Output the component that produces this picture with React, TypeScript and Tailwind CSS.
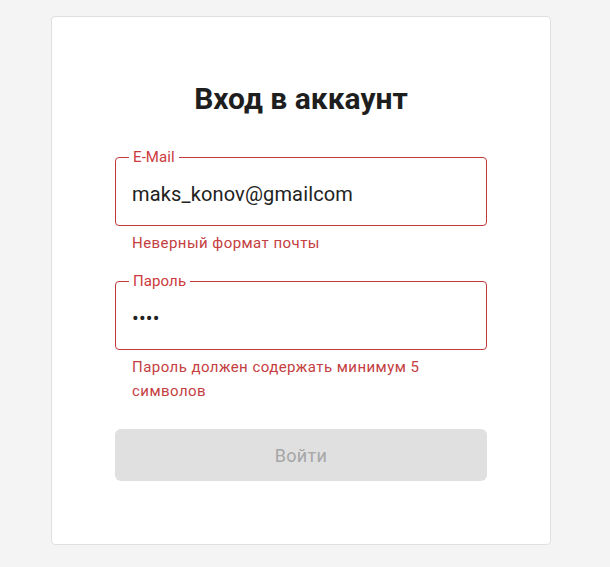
import { useState } from 'react';

function Field({
  label,
  type,
  value,
  error,
  onChange,
}: {
  label: string;
  type: string;
  value: string;
  error: string;
  onChange: (v: string) => void;
}) {
  return (
    <div>
      <fieldset className="border border-[#c0393b] rounded-[4px] px-[13px] m-0 min-w-0">
        <legend className="px-[4px] text-[15px] leading-[16px] text-[#cc3a3d] tracking-[0.1px]">{label}</legend>
        <input
          type={type}
          value={value}
          onChange={(e) => onChange(e.target.value)}
          className="w-full h-[60px] pl-[3px] pb-[2px] outline-none bg-transparent text-[20px] text-[#222] tracking-[0.15px]"
        />
      </fieldset>
      <p className="mt-[5px] px-[17px] text-[15px] leading-[24px] tracking-[0.45px] text-[#c4403f]">{error}</p>
    </div>
  );
}

export default function App() {
  const [email, setEmail] = useState('maks_konov@gmailcom');
  const [password, setPassword] = useState('1234');

  return (
    <div
      className="min-h-[567px] bg-[#f4f4f4] pt-[16px]"
      style={{ fontFamily: 'Roboto, "Noto Sans", sans-serif' }}
    >
      <div className="ml-[51px] w-[500px] bg-white border border-[#e0e0e0] rounded-[4px] px-[63px] pt-[64px] pb-[63px]">
        <h1 className="text-center text-[30px] leading-[36px] font-bold text-[#1e1e1e] mb-[32px]">
          Вход в аккаунт
        </h1>

        <Field label="E-Mail" type="text" value={email} error="Неверный формат почты" onChange={setEmail} />

        <div className="mt-[18px]">
          <Field
            label="Пароль"
            type="password"
            value={password}
            error="Пароль должен содержать минимум 5 символов"
            onChange={setPassword}
          />
        </div>

        <button
          disabled
          className="mt-[26px] w-full h-[52px] rounded-[6px] bg-[#e0e0e0] text-[18px] text-[#a6a6a6] tracking-[0.3px]"
        >
          Войти
        </button>
      </div>
    </div>
  );
}
